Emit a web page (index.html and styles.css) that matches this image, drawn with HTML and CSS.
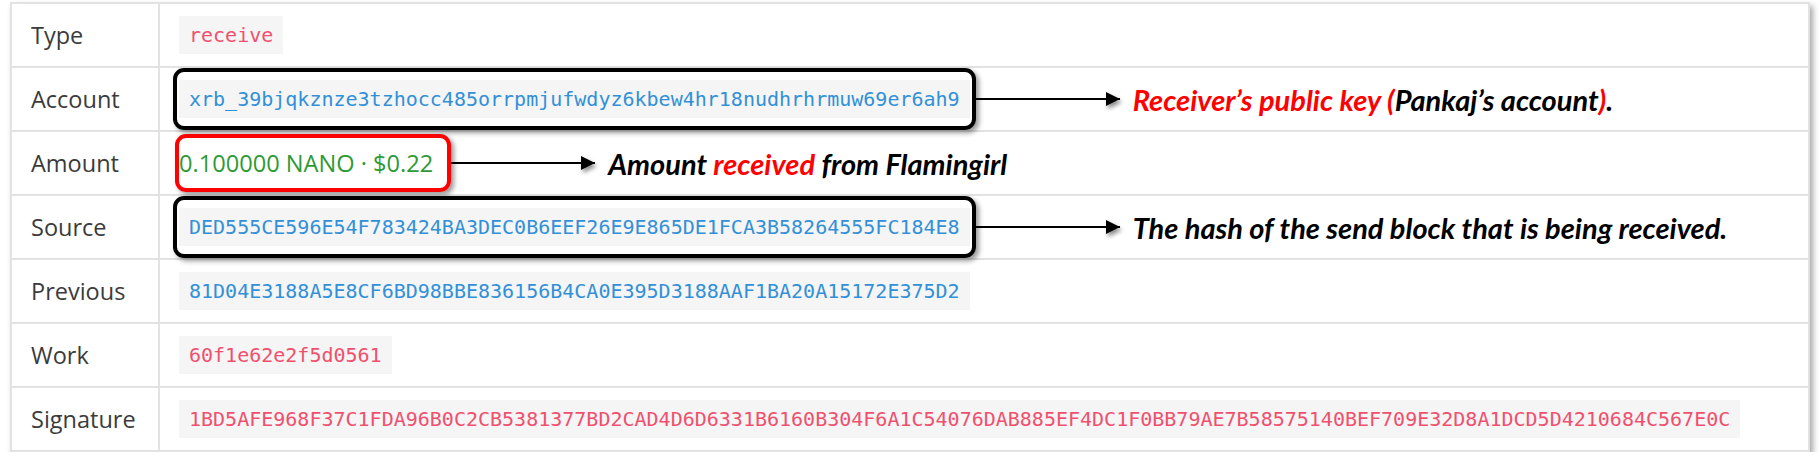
FILE: index.html
```html
<!DOCTYPE html>
<html lang="en">
<head>
  <meta charset="UTF-8" />
  <meta name="viewport" content="width=device-width, initial-scale=1.0"/>
  <title>Receive Block</title>
  <link rel="stylesheet" href="styles.css">
</head>
<body>
  <div class="sheet">
    <div class="row">
      <div class="key">Type</div>
      <div class="val"><code class="red">receive</code></div>
    </div>

    <div class="row">
      <div class="key">Account</div>
      <div class="val">
        <span class="mark"><code class="blue">xrb_39bjqkznze3tzhocc485orrpmjufwdyz6kbew4hr18nudhrhrmuw69er6ah9</code></span>
        <span class="arrow"></span>
        <span class="note"><span class="hl">Receiver’s public key (</span>Pankaj’s account<span class="hl">)</span>.</span>
      </div>
    </div>

    <div class="row">
      <div class="key">Amount</div>
      <div class="val">
        <span class="mark mark-red"><span class="amount">0.100000 NANO · $0.22</span></span>
        <span class="arrow"></span>
        <span class="note">Amount <span class="hl">received</span> from Flamingirl</span>
      </div>
    </div>

    <div class="row">
      <div class="key">Source</div>
      <div class="val">
        <span class="mark"><code class="blue">DED555CE596E54F783424BA3DEC0B6EEF26E9E865DE1FCA3B58264555FC184E8</code></span>
        <span class="arrow"></span>
        <span class="note">The hash of the send block that is being received.</span>
      </div>
    </div>

    <div class="row">
      <div class="key">Previous</div>
      <div class="val"><code class="blue">81D04E3188A5E8CF6BD98BBE836156B4CA0E395D3188AAF1BA20A15172E375D2</code></div>
    </div>

    <div class="row">
      <div class="key">Work</div>
      <div class="val"><code class="red">60f1e62e2f5d0561</code></div>
    </div>

    <div class="row">
      <div class="key">Signature</div>
      <div class="val"><code class="red">1BD5AFE968F37C1FDA96B0C2CB5381377BD2CAD4D6D6331B6160B304F6A1C54076DAB885EF4DC1F0BB79AE7B58575140BEF709E32D8A1DCD5D4210684C567E0C</code></div>
    </div>
  </div>
</body>
</html>
```

FILE: styles.css
```css
body {
  margin: 0;
  background: #fff;
  font-family: "Open Sans", sans-serif;
}

.sheet {
  margin: 2px 0 0 10px;
  width: 1800px;
  box-sizing: border-box;
  border: 2px solid #e2e2e2;
  box-shadow: 3px 4px 6px rgba(0,0,0,0.35);
}

.row {
  display: grid;
  grid-template-columns: 148px 1fr;
  height: 62px;
}

.row + .row {
  border-top: 2px solid #e2e2e2;
}

.key {
  box-sizing: border-box;
  border-right: 2px solid #e2e2e2;
  padding-left: 19px;
  display: flex;
  align-items: center;
  font-size: 23.5px;
  color: #3b3b3b;
}

.val {
  display: flex;
  align-items: center;
  padding-left: 19px;
  white-space: nowrap;
}

code {
  display: inline-block;
  font-family: "DejaVu Sans Mono", monospace;
  font-size: 20px;
  line-height: 38px;
  padding: 0 10px;
  background: #f5f5f5;
}

.blue { color: #3290d8; }
.red { color: #f0506e; }

.amount {
  font-size: 23.6px;
  line-height: 32px;
  color: #2f9a35;
}

.mark {
  display: inline-flex;
  flex: none;
  border: 4px solid #000;
  border-radius: 11px;
  padding: 8px 2px;
  margin-left: -6px;
  box-shadow: 3px 3px 5px rgba(0,0,0,0.4);
}

.mark-red {
  border-color: #f00;
  padding: 9px 14px 9px 0;
  margin-left: -4px;
}

.arrow {
  position: relative;
  flex: none;
  width: 144px;
  height: 2px;
  background: #000;
}

.arrow::after {
  content: "";
  position: absolute;
  right: 0;
  top: -6px;
  border-left: 14px solid #000;
  border-top: 7px solid transparent;
  border-bottom: 7px solid transparent;
  filter: drop-shadow(2px 3px 2px rgba(0,0,0,0.45));
}

.note {
  margin-left: 13px;
  font-family: Lato, sans-serif;
  font-weight: 700;
  font-style: italic;
  font-size: 29px;
  color: #000;
}

.note .hl {
  color: #f00;
}
```
